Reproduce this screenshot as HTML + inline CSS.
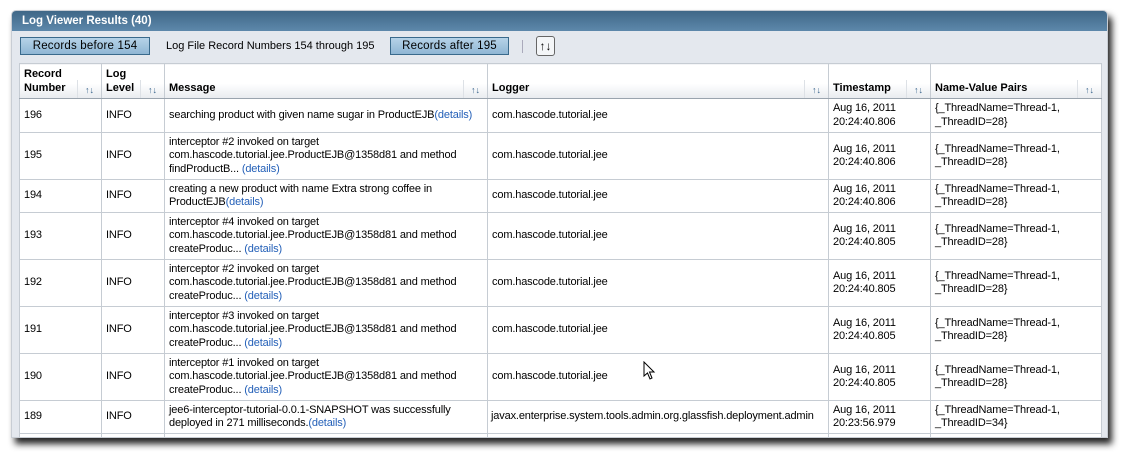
<!DOCTYPE html>
<html><head><style>
*{margin:0;padding:0;box-sizing:border-box}
body{width:1141px;height:457px;background:#fff;font-family:"Liberation Sans",Arial,sans-serif;font-size:11px;color:#000;position:relative;overflow:hidden}
#panel{position:absolute;left:11px;top:10px;width:1097px;height:428px;background:#e4e8ee;border-radius:5px 5px 0 0;box-shadow:4px 6px 7px rgba(0,0,0,.85);overflow:hidden;border:1px solid #c8cdd4}
#hdr{height:20px;background:linear-gradient(#3f6787,#5d88ab);color:#fff;font-weight:bold;font-size:11.5px;padding:4px 0 0 10px}
.btn{position:absolute;top:26px;height:18px;border:1px solid #3a6a8c;background:linear-gradient(#b6d3e8,#8fb6d4);font-size:11.5px;padding:2px 0 0 0;text-align:center;letter-spacing:.2px}
table{position:absolute;left:7px;top:52px;border-collapse:collapse;background:#fff;table-layout:fixed}
td,th{border:1px solid #c6ccd3;vertical-align:middle;padding:0 4px;line-height:13.5px;text-align:left;letter-spacing:-0.15px}
th{font-weight:bold;height:35px;background:linear-gradient(#fff 0,#fff 55%,#e8ebef);vertical-align:bottom;padding-bottom:3px;position:relative;border-bottom:1px solid #9aa4ae;letter-spacing:0}
th .s{position:absolute;right:0;bottom:0;width:24px;height:18px;border-left:1px solid #dde1e6;color:#36628a;font-size:9px;text-align:center;padding-top:4px}
a{color:#2460b8;text-decoration:none}
</style></head><body>
<div id="panel">
<div id="hdr">Log Viewer Results (40)</div>
<div class="btn" style="left:8px;width:130px">Records before 154</div>
<div style="position:absolute;left:154px;top:29px">Log File Record Numbers 154 through 195</div>
<div class="btn" style="left:378px;width:119px">Records after 195</div>
<div style="position:absolute;left:510px;top:29px;width:1px;height:13px;background:#aab"></div>
<div style="position:absolute;left:524px;top:25px;width:19px;height:20px;border:1px solid #666;border-radius:3px;background:#f4f6f8;font-size:12px;text-align:center;line-height:18px;font-weight:bold">↑↓</div>
<table>
<colgroup><col style="width:82px"><col style="width:63px"><col style="width:323px"><col style="width:341px"><col style="width:102px"><col style="width:171px"></colgroup>
<tr><th>Record<br>Number<span class="s">↑↓</span></th><th>Log<br>Level<span class="s">↑↓</span></th><th>Message<span class="s">↑↓</span></th><th>Logger<span class="s">↑↓</span></th><th>Timestamp<span class="s">↑↓</span></th><th>Name-Value Pairs<span class="s">↑↓</span></th></tr>
<tr style="height:34px"><td>196</td><td>INFO</td><td style="white-space:nowrap">searching product with given name sugar in ProductEJB<a>(details)</a></td><td>com.hascode.tutorial.jee</td><td>Aug 16, 2011<br>20:24:40.806</td><td>{_ThreadName=Thread-1,<br>_ThreadID=28}</td></tr>
<tr style="height:47px"><td>195</td><td>INFO</td><td>interceptor #2 invoked on target<br>com.hascode.tutorial.jee.ProductEJB@1358d81 and method<br>findProductB... <a>(details)</a></td><td>com.hascode.tutorial.jee</td><td>Aug 16, 2011<br>20:24:40.806</td><td>{_ThreadName=Thread-1,<br>_ThreadID=28}</td></tr>
<tr style="height:33px"><td>194</td><td>INFO</td><td>creating a new product with name Extra strong coffee in<br>ProductEJB<a>(details)</a></td><td>com.hascode.tutorial.jee</td><td>Aug 16, 2011<br>20:24:40.806</td><td>{_ThreadName=Thread-1,<br>_ThreadID=28}</td></tr>
<tr style="height:47px"><td>193</td><td>INFO</td><td>interceptor #4 invoked on target<br>com.hascode.tutorial.jee.ProductEJB@1358d81 and method<br>createProduc... <a>(details)</a></td><td>com.hascode.tutorial.jee</td><td>Aug 16, 2011<br>20:24:40.805</td><td>{_ThreadName=Thread-1,<br>_ThreadID=28}</td></tr>
<tr style="height:47px"><td>192</td><td>INFO</td><td>interceptor #2 invoked on target<br>com.hascode.tutorial.jee.ProductEJB@1358d81 and method<br>createProduc... <a>(details)</a></td><td>com.hascode.tutorial.jee</td><td>Aug 16, 2011<br>20:24:40.805</td><td>{_ThreadName=Thread-1,<br>_ThreadID=28}</td></tr>
<tr style="height:47px"><td>191</td><td>INFO</td><td>interceptor #3 invoked on target<br>com.hascode.tutorial.jee.ProductEJB@1358d81 and method<br>createProduc... <a>(details)</a></td><td>com.hascode.tutorial.jee</td><td>Aug 16, 2011<br>20:24:40.805</td><td>{_ThreadName=Thread-1,<br>_ThreadID=28}</td></tr>
<tr style="height:47px"><td>190</td><td>INFO</td><td>interceptor #1 invoked on target<br>com.hascode.tutorial.jee.ProductEJB@1358d81 and method<br>createProduc... <a>(details)</a></td><td>com.hascode.tutorial.jee</td><td>Aug 16, 2011<br>20:24:40.805</td><td>{_ThreadName=Thread-1,<br>_ThreadID=28}</td></tr>
<tr style="height:33px"><td>189</td><td>INFO</td><td>jee6-interceptor-tutorial-0.0.1-SNAPSHOT was successfully<br>deployed in 271 milliseconds.<a>(details)</a></td><td style="padding:0 3px;white-space:nowrap">javax.enterprise.system.tools.admin.org.glassfish.deployment.admin</td><td>Aug 16, 2011<br>20:23:56.979</td><td>{_ThreadName=Thread-1,<br>_ThreadID=34}</td></tr>
<tr style="height:20px"><td></td><td></td><td></td><td></td><td></td><td></td></tr>
</table>
</div>
<svg style="position:absolute;left:643px;top:361px" width="14" height="20"><path d="M1 1 L1 15 L4.5 12 L7 18 L9 17 L6.5 11 L11 11 Z" fill="#fff" stroke="#000" stroke-width="1"/></svg>
</body></html>
